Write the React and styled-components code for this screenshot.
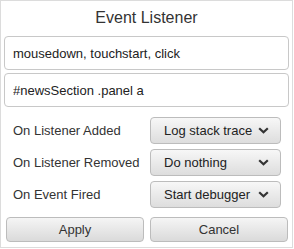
import React from "react";
import styled, { createGlobalStyle } from "styled-components";

const Global = createGlobalStyle`
  html, body { margin: 0; padding: 0; background: #fff; }
  body { font-family: "Liberation Sans", Arial, sans-serif; }
`;

const Dialog = styled.div`
  box-sizing: border-box;
  width: 293px;
  height: 248px;
  border: 1px solid #dcdcdc;
  background: #fff;
  padding: 0 3px;
  display: flex;
  flex-direction: column;
  color: #333;
`;

const Title = styled.div`
  height: 35px;
  line-height: 34px;
  text-align: center;
  font-size: 16px;
  color: #333;
`;

const Fields = styled.div`
  display: flex;
  flex-direction: column;
  gap: 3px;
`;

const TextInput = styled.input`
  box-sizing: border-box;
  height: 34px;
  width: 100%;
  border: 1px solid #c8c8c8;
  border-radius: 4px;
  padding: 0 8px;
  font-family: inherit;
  font-size: 13px;
  color: #222;
  outline: none;
  background: #fff;
`;

const Rows = styled.div`
  display: flex;
  flex-direction: column;
  gap: 5px;
  margin-top: 10px;
  padding-left: 9px;
`;

const Row = styled.div`
  display: flex;
  align-items: center;
  height: 27px;
`;

const Label = styled.div`
  width: 137px;
  font-size: 13px;
  color: #333;
`;

const Select = styled.div`
  box-sizing: border-box;
  width: 131px;
  height: 27px;
  display: flex;
  align-items: center;
  justify-content: space-between;
  padding: 0 11px 0 13px;
  border: 1px solid #bcbcbc;
  border-radius: 4px;
  background: linear-gradient(#f7f7f7, #dddddd);
  font-size: 13px;
  color: #222;
`;

const Buttons = styled.div`
  display: grid;
  grid-template-columns: 138px 138px;
  gap: 6px;
  margin-top: 9px;
  padding-left: 2px;
`;

const Button = styled.button`
  box-sizing: border-box;
  height: 25px;
  border: 1px solid #bcbcbc;
  border-radius: 4px;
  background: linear-gradient(#f5f5f5, #dadada);
  font-family: inherit;
  font-size: 13px;
  color: #333;
  padding: 0;
`;

const Chevron = () => (
  <svg width="11" height="7" viewBox="0 0 11 7">
    <polyline points="1.2,1.2 5.5,5.3 9.8,1.2" fill="none" stroke="#333" strokeWidth="2.2" />
  </svg>
);

const rows = [
  ["On Listener Added", "Log stack trace"],
  ["On Listener Removed", "Do nothing"],
  ["On Event Fired", "Start debugger"],
];

export default function App() {
  return (
    <>
      <Global />
      <Dialog>
        <Title>Event Listener</Title>
        <Fields>
          <TextInput defaultValue="mousedown, touchstart, click" />
          <TextInput defaultValue="#newsSection .panel a" />
        </Fields>
        <Rows>
          {rows.map(([l, v]) => (
            <Row key={l}>
              <Label>{l}</Label>
              <Select>
                <span>{v}</span>
                <Chevron />
              </Select>
            </Row>
          ))}
        </Rows>
        <Buttons>
          <Button>Apply</Button>
          <Button>Cancel</Button>
        </Buttons>
      </Dialog>
    </>
  );
}
